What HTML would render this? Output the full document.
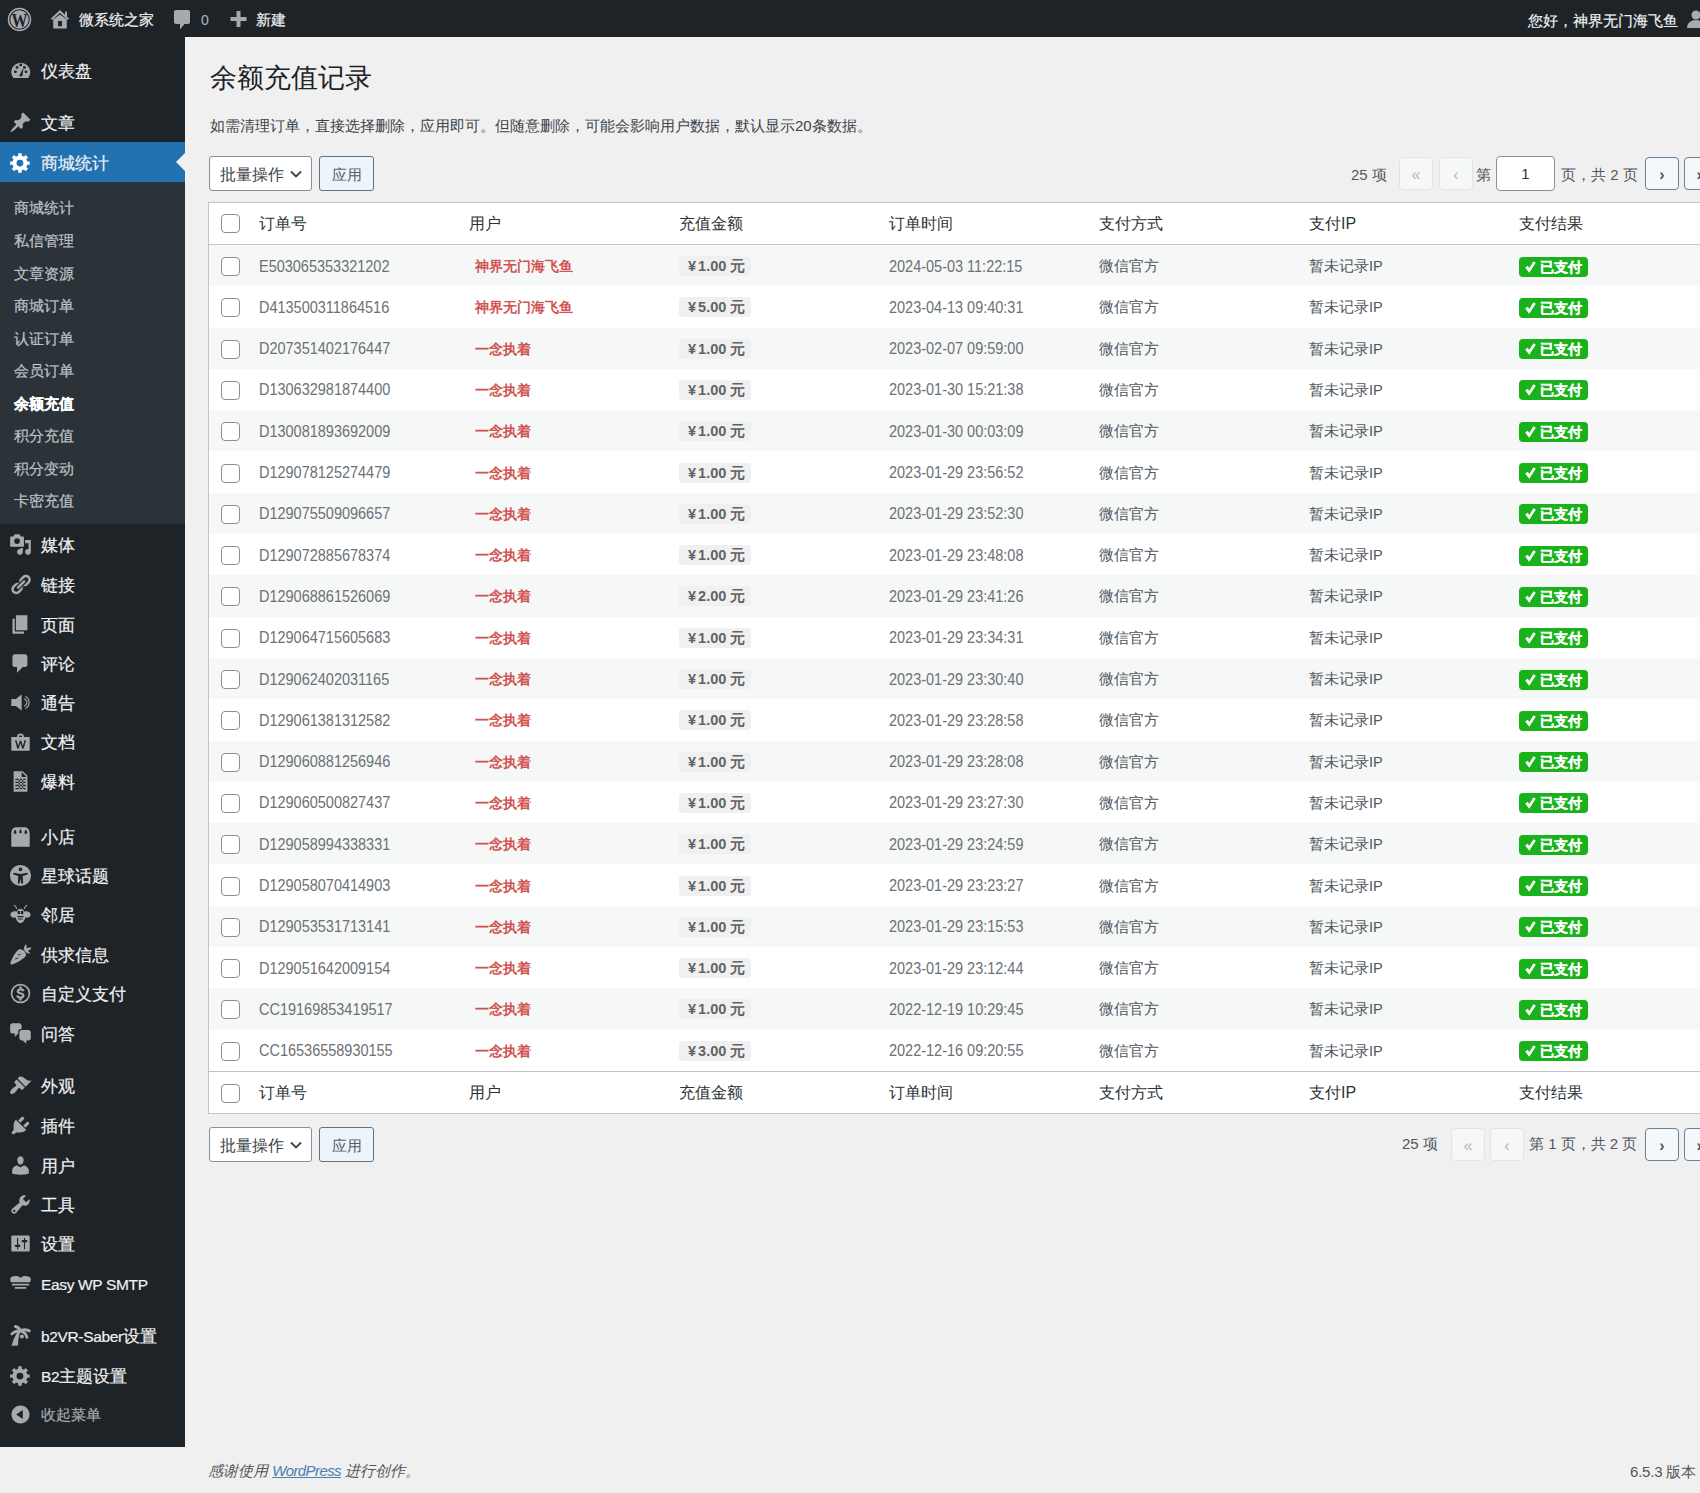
<!DOCTYPE html>
<html><head><meta charset="utf-8">
<style>
*{box-sizing:border-box;margin:0;padding:0}
html,body{width:1700px;height:1493px;overflow:hidden;background:#f0f0f1;font-family:"Liberation Sans",sans-serif;color:#3c434a}
.mi,.si,#ab .t{-webkit-text-stroke:0.2px currentColor}
.abs{position:absolute}
#ab{position:absolute;left:0;top:0;width:1700px;height:37px;background:#1d2327;color:#f0f0f1;font-size:15px}
#ab .t{position:absolute;line-height:20px;top:10px;white-space:nowrap}
#sb{position:absolute;left:0;top:37px;width:185px;height:1410px;background:#1d2327}
#sub{position:absolute;left:0;top:145px;width:185px;height:342px;background:#2c3338}
#cur{position:absolute;left:0;top:105px;width:185px;height:40px;background:#2271b1}
.mi{position:absolute;left:0;width:185px;height:20px;line-height:20px;font-size:16.5px;color:#f0f0f1;white-space:nowrap}
.mi > span{position:absolute;left:41px;top:1px}
.mi svg{position:absolute;left:9px;top:-1.5px;width:23px;height:23px}
.si{position:absolute;left:14px;height:20px;line-height:20px;font-size:15px;margin-top:1.5px;color:rgba(240,246,252,.7);white-space:nowrap}
.ic{fill:#a7aaad}
.lat{font-size:15.5px;letter-spacing:-0.35px}
h1{position:absolute;left:210px;top:61px;font-size:26.6px;font-weight:400;color:#1d2327;line-height:34px;white-space:nowrap}
.desc{position:absolute;left:210px;top:115.5px;font-size:15px;line-height:20px;color:#3c434a;white-space:nowrap}
.sel{position:absolute;left:209px;width:103px;height:35px;border:1px solid #8c8f94;border-radius:3px;background:#fff;font-size:16px;color:#3c434a;line-height:35px;padding-left:10px}
.sel svg{position:absolute;right:8px;top:10px}
.btn{position:absolute;left:319px;width:55px;height:35px;border:1px solid #5f7285;border-radius:3px;background:#eef5fa;font-size:15px;color:#50606e;line-height:35px;text-align:center}
.pg{position:absolute;height:35px;font-size:15px;color:#50575e;line-height:37px;white-space:nowrap}
.pb{position:absolute;width:34px;height:33px;margin-top:1px;border:1px solid #e2e3e4;border-radius:4px;background:#f6f7f7;color:#b5b8bb;text-align:center;line-height:33px;font-size:16px}
.pb.on{border-color:#6a8199;color:#50575e;background:#f5f8fa;font-weight:bold}
.pinput{position:absolute;width:59px;height:35px;border:1px solid #8c8f94;border-radius:4px;background:#fff;text-align:center;line-height:33px;font-size:15px;color:#2c3338}
#tbl{position:absolute;left:208px;top:202px;width:1530px;height:912px;background:#fff;border:1px solid #c3c4c7}
.row{position:absolute;left:0;width:1530px;height:41.3px;font-size:14.6px;color:#50575e;white-space:nowrap}
.row.odd{background:#f6f7f7}
.row div{position:absolute;top:1px;height:41.3px;line-height:41.3px}
.row .c1,.row .c4{font-size:16px;transform:scaleX(0.905);transform-origin:0 0;color:#6c7176;top:0.5px}
.hrow{position:absolute;left:0;width:1530px;height:41px;font-size:16px;color:#2c3338;white-space:nowrap}
.hrow div{position:absolute;top:0;height:41px;line-height:41px}
.chk{position:absolute;left:12px;top:11px;width:19px;height:19px;border:1px solid #8c8f94;border-radius:4px;background:#fff}
.usr{color:#d05452;font-weight:bold;font-size:14px;margin-left:6px}
.amt{display:inline-block;background:#f0f0f0;color:#50575e;font-weight:bold;font-size:14px;height:20px;line-height:20px;padding:0 6px 0 9px;border-radius:3px;font-size:14.5px;color:#5f6368}
.paid{position:relative;top:0.5px;-webkit-text-stroke:0.3px #fff;display:inline-block;background:#19b21b;color:#fff;font-weight:bold;font-size:14px;height:20px;line-height:20px;padding:0 6px;border-radius:4px}
.foot{position:absolute;left:208px;top:1461px;font-size:15px;font-style:italic;color:#50575e;line-height:20px;white-space:nowrap}
.foot a{color:#4a7fae;text-decoration:underline;letter-spacing:-0.6px}
.ver{position:absolute;left:1630px;top:1462px;letter-spacing:-0.2px;font-size:15px;color:#50575e;line-height:20px;white-space:nowrap}
</style></head><body>
<div id="ab">
 <svg class="abs" style="left:7px;top:6.5px" width="25" height="25" viewBox="0 0 25 25"><circle cx="12.5" cy="12.5" r="11" fill="none" stroke="#a7aaad" stroke-width="1.5"/><circle cx="12.5" cy="12.5" r="9.2" fill="#a7aaad"/><text x="12.6" y="19.8" text-anchor="middle" font-family="Liberation Serif" font-weight="bold" font-size="19" fill="#1d2327" textLength="16" lengthAdjust="spacingAndGlyphs">W</text></svg>
 <svg class="abs" style="left:45px;top:5px" width="30" height="30" viewBox="0 0 30 30"><polyline points="6.6,14.2 14.9,6.4 23.3,14.2" fill="none" stroke="#a7aaad" stroke-width="2"/><rect x="20" y="6.6" width="2" height="4.5" fill="#a7aaad"/><path fill-rule="evenodd" d="M8.2 14.6L14.9 9.4 21.8 14.6V23.5H8.2z M13 16h4v5.3h-4z" fill="#a7aaad"/></svg>
 <div class="t" style="left:79px">微系统之家</div>
 <svg class="abs" style="left:174px;top:10px" width="16" height="20" viewBox="0 0 16 20"><path d="M2 0h12a2 2 0 0 1 2 2v10a2 2 0 0 1-2 2H10.5l-4.5 5.5V14H2a2 2 0 0 1-2-2V2a2 2 0 0 1 2-2z" fill="#a7aaad"/></svg>
 <div class="t" style="left:201px;color:#a7aaad;font-size:14px;top:10px">0</div>
 <svg class="abs" style="left:230px;top:11px" width="17" height="16" viewBox="0 0 17 16"><path d="M6.5 0h4v6h6v4h-6v6h-4v-6h-6V6h6z" fill="#a7aaad"/></svg>
 <div class="t" style="left:256px">新建</div>
 <div class="t" style="left:1528px;top:10.5px">您好，神界无门海飞鱼</div>
 <svg class="abs" style="left:1686px;top:9px" width="20" height="20" viewBox="0 0 20 20"><circle cx="10" cy="6" r="4.5" fill="#a7aaad"/><path d="M1 19c0-5 4-8 9-8s9 3 9 8z" fill="#a7aaad"/></svg>
</div>
<div id="sb">
 <div id="cur"></div>
 <div id="sub"></div>
</div>
<div class="mi" style="top:60px"><svg viewBox="0 0 20 20" style="fill:#a7aaad" fill-rule="evenodd"><g transform="translate(10.2 10) scale(0.92 0.9) translate(-10 -10)"><path d="M3 17.2h14A9 9 0 1 0 3 17.2z M3.6 11.3a1.4 1.4 0 1 0 2.8 0a1.4 1.4 0 1 0-2.8 0z M13.6 11.3a1.4 1.4 0 1 0 2.8 0a1.4 1.4 0 1 0-2.8 0z M5.1 7a1.4 1.4 0 1 0 2.8 0a1.4 1.4 0 1 0-2.8 0z M12.1 7a1.4 1.4 0 1 0 2.8 0a1.4 1.4 0 1 0-2.8 0z M8.6 4.6a1.4 1.4 0 1 0 2.8 0a1.4 1.4 0 1 0-2.8 0z M8.3 15.6h3.2l1.3-8.6z"/></g></svg><span>仪表盘</span></div>
<div class="mi" style="top:112px"><svg viewBox="0 0 20 20" style="fill:#a7aaad" fill-rule="evenodd"><path d="M10.44 3.02l1.82-1.82 6.36 6.35-1.83 1.82c-1.05-.68-2.48-.57-3.41.36l-.75.75c-.92.93-1.04 2.35-.35 3.41l-1.83 1.82-2.41-2.41-2.8 2.79c-.42.42-3.38 2.71-3.8 2.29s1.86-3.39 2.28-3.81l2.79-2.79L4.1 9.36l1.83-1.82c1.05.69 2.48.57 3.4-.36l.75-.75c.93-.92 1.05-2.35.36-3.41z"/></svg><span>文章</span></div>
<div class="mi" style="top:152px"><svg viewBox="0 0 20 20" style="fill:#fff" fill-rule="evenodd"><path d="M18 12h-2.18c-.17.7-.44 1.35-.81 1.93l1.54 1.54-2.1 2.1-1.54-1.54c-.58.36-1.23.63-1.91.79V19H8v-2.18c-.68-.16-1.33-.43-1.91-.79l-1.54 1.54-2.12-2.12 1.54-1.54c-.36-.58-.63-1.23-.79-1.91H1V9.03h2.17c.16-.7.44-1.35.8-1.94L2.43 5.55l2.1-2.1 1.54 1.54c.58-.37 1.24-.64 1.930-.81V2h3v2.18c.68.16 1.33.43 1.91.79l1.54-1.54 2.12 2.12-1.54 1.54c.36.59.64 1.24.8 1.94H18V12z M6.5 10.5a3 3 0 1 0 6 0a3 3 0 1 0-6 0z"/></svg><span>商城统计</span></div>
<div class="mi" style="top:534px"><svg viewBox="0 0 20 20" style="fill:#a7aaad" fill-rule="evenodd"><path d="M13 11V4c0-.55-.45-1-1-1h-1.67L9 1H5L3.67 3H2c-.55 0-1 .45-1 1v7c0 .55.45 1 1 1h10c.55 0 1-.45 1-1z M4.5 7a2.5 2.5 0 1 0 5 0a2.5 2.5 0 1 0-5 0z M14 6h5v10.5c0 1.38-1.12 2.5-2.5 2.5S14 17.880 14 16.5s1.12-2.5 2.5-2.5c.17 0 .34.02.5.05V9h-3V6z M10 14.05V13h2v3.5c0 1.38-1.12 2.5-2.5 2.5S7 17.88 7 16.5 8.12 14 9.5 14c.17 0 .34.02.5.05z"/></svg><span>媒体</span></div>
<div class="mi" style="top:574px"><svg viewBox="0 0 20 20" style="fill:#a7aaad" fill-rule="evenodd"><path fill-rule="nonzero" d="M17.74 2.76c1.68 1.69 1.68 4.41 0 6.1l-1.53 1.52c-1.12 1.12-2.7 1.47-4.14 1.09l2.62-2.61.76-.77.76-.76c.84-.84.84-2.2 0-3.04-.84-.85-2.2-.85-3.04 0l-.77.76-3.38 3.380c-.37-1.44-.02-3.02 1.1-4.14l1.52-1.53c1.69-1.68 4.42-1.68 6.1 0zM8.59 13.43l5.34-5.34c.42-.42.42-1.1 0-1.52-.44-.43-1.13-.39-1.53 0l-5.33 5.34c-.42.42-.42 1.1 0 1.52.44.43 1.13.39 1.52 0zm-.76 2.29l4.14-4.15c.38 1.44.03 3.02-1.09 4.14l-1.52 1.53c-1.69 1.68-4.41 1.68-6.1 0-1.68-1.68-1.68-4.42 0-6.1l1.53-1.52c1.12-1.12 2.7-1.47 4.14-1.1l-4.14 4.15c-.85.84-.85 2.2 0 3.05.84.84 2.2.84 3.04 0z"/></svg><span>链接</span></div>
<div class="mi" style="top:614px"><svg viewBox="0 0 20 20" style="fill:#a7aaad" fill-rule="evenodd"><path d="M6 15V2h10v13H6z M5 16h8v2H3V5h2v11z"/></svg><span>页面</span></div>
<div class="mi" style="top:653px"><svg viewBox="0 0 20 20" style="fill:#a7aaad" fill-rule="evenodd"><path d="M5 2h9c1.1 0 2 .9 2 2v7c0 1.1-.9 2-2 2h-2l-5 5v-5H5c-1.1 0-2-.9-2-2V4c0-1.1.9-2 2-2z"/></svg><span>评论</span></div>
<div class="mi" style="top:692px"><svg viewBox="0 0 20 20" style="fill:#a7aaad" fill-rule="evenodd"><path fill-rule="nonzero" d="M2 7h4l5-4v14l-5-4H2V7zm12.69-2.46C14.82 4.59 18 5.920 18 10s-3.18 5.41-3.31 5.46c-.06.03-.13.04-.19.04-.2 0-.39-.12-.46-.31-.11-.26.02-.55.27-.65.11-.05 2.69-1.15 2.69-4.54 0-3.41-2.66-4.53-2.69-4.54-.25-.1-.38-.39-.27-.65.1-.25.39-.38.65-.27zM16 10c0 2.57-2.23 3.43-2.32 3.47-.06.02-.12.03-.18.03-.2 0-.39-.12-.47-.32-.1-.26.04-.55.29-.65.07-.02 1.68-.67 1.68-2.53s-1.61-2.51-1.68-2.53c-.25-.1-.38-.39-.29-.65.1-.25.39-.39.65-.29.09.04 2.32.9 2.32 3.47z"/></svg><span>通告</span></div>
<div class="mi" style="top:731px"><svg viewBox="0 0 20 20" style="fill:#a7aaad" fill-rule="evenodd"><path d="M2 6h16v12H2z M7 6a3 3 0 0 1 6 0h-1.6a1.4 1.4 0 0 0-2.8 0z M5.2 9l2 7h1.3l1.5-4.6 1.5 4.6h1.3l2-7h-1.3l-1.4 5-1.5-4.7h-1.2l-1.5 4.7-1.4-5z"/></svg><span>文档</span></div>
<div class="mi" style="top:771px"><svg viewBox="0 0 20 20" style="fill:#a7aaad" fill-rule="evenodd"><path d="M4 1h8l4 4v14H4z M11 1.8V6h4.2z M5.5 7.5h9v1.2h-9z M5.5 10.2h9v1.2h-9z M5.5 12.9h9v1.2h-9z M5.5 15.6h9v1.2h-9z M8.4 7.5h1v9.3h-1z M11.4 7.5h1v9.3h-1z"/></svg><span>爆料</span></div>
<div class="mi" style="top:826px"><svg viewBox="0 0 20 20" style="fill:#a7aaad" fill-rule="evenodd"><path d="M2 7.5C2 3.5 4 2 7 2h6c3 0 5 1.5 5 5.5V19H2z M5.300 4.300c.8 0 1.200 1.500 1.200 3.200H4.200c0-1.700.3-3.200 1.100-3.200z M10 3.600c.7 0 1 1.600 1 3.600H9c0-2 .3-3.600 1-3.600z M14.700 4.300c.8 0 1.100 1.500 1.100 3.200h-2.300c0-1.700.4-3.200 1.200-3.200z"/></svg><span>小店</span></div>
<div class="mi" style="top:865px"><svg viewBox="0 0 20 20" style="fill:#a7aaad" fill-rule="evenodd"><path d="M0.8 10a9.2 9.2 0 1 0 18.4 0a9.2 9.2 0 1 0-18.4 0z M8.4 4.6a1.6 1.6 0 1 0 3.2 0a1.6 1.6 0 1 0-3.2 0z M3.8 7.6l6.2 1 6.2-1v1.6l-4.300 1.300.4 6.500h-1.600l-.7-4.200-.7 4.200H7.700l.4-6.500-4.300-1.300z"/></svg><span>星球话题</span></div>
<div class="mi" style="top:904px"><svg viewBox="0 0 20 20" style="fill:#a7aaad" fill-rule="evenodd"><path d="M10 5c1.8 0 3 1.2 3.2 2.6 2.6-1 5.6.3 5.6 2.6 0 2-2.3 3-4.6 2.5-.6 2.6-2.2 4.8-4.2 4.8s-3.6-2.2-4.2-4.8c-2.3.5-4.6-.5-4.6-2.5 0-2.3 3-3.6 5.6-2.6C7 6.2 8.200 5 10 5z M7.3 11.3h5.4v1H7.3z M8 13.4h4v.9H8z M7.6 8.2a1.1 1.1 0 1 0 2 0a1.1 1.1 0 1 0-2 0z M10.4 8.2a1.1 1.1 0 1 0 2 0a1.1 1.1 0 1 0-2 0z M4.5 1.5c1.3.8 2.3 2 2.7 3.5l-.8.4C6 4 5.2 3 4 2.2z M15.5 1.5c-1.3.8-2.3 2-2.7 3.5l.8.4c.4-1.4 1.2-2.400 2.4-3.2z"/></svg><span>邻居</span></div>
<div class="mi" style="top:944px"><svg viewBox="0 0 20 20" style="fill:#a7aaad" fill-rule="evenodd"><path d="M1.5 18.5c1.5 1.3 11.6-4.7 13.1-7.2.7-1.2-.1-3-1.5-4.4C11.3 5.4 9.400 5 8.200 5.800 6 7.400 4 11 2.800 13.500 1.8 15.600 .8 17.900 1.500 18.500z M12.800 5.500c.200-1.700.800-3.600 2-4.500.800 1 .800 2.500.400 3.700 1.200-.800 2.800-1 4.300-.700-.400 1.500-1.700 2.500-3.200 2.900 1 .400 1.800 1.200 2.100 2.200-1.500.300-3-.200-4-1.200z M5.200 13.600l2.600-1 .3.7-2.600 1z M7.600 10.200l2.300-.9.3.7-2.300.9z"/></svg><span>供求信息</span></div>
<div class="mi" style="top:983px"><svg viewBox="0 0 20 20" style="fill:#a7aaad" fill-rule="evenodd"><path d="M1.500 10a8.500 8.500 0 1 0 17 0a8.500 8.500 0 1 0-17 0z M3 10a7 7 0 1 0 14 0a7 7 0 1 0-14 0z M9 3.900h2v1.500c1.300.3 2.300 1.100 2.500 2.300l-2 .5c-.2-.6-.7-.9-1.500-.9-.8 0-1.200.3-1.200.8 0 .6.600.8 1.700 1.100 1.700.4 3 1 3 2.800 0 1.300-1 2.200-2.500 2.500v1.500H9v-1.500c-1.600-.3-2.600-1.200-2.800-2.500l2-.5c.2.800.9 1.200 1.800 1.200s1.400-.3 1.400-.9c0-.6-.6-.8-1.800-1.100-1.600-.4-2.900-1-2.900-2.700 0-1.300.9-2.100 2.300-2.400z"/></svg><span>自定义支付</span></div>
<div class="mi" style="top:1023px"><svg viewBox="0 0 20 20" style="fill:#a7aaad" fill-rule="evenodd"><path d="M11 6h-.82C9.07 6 8 7.2 8 8.16V10l-3 3v-3H3c-1.1 0-2-.9-2-2V3c0-1.1.9-2 2-2h6c1.1 0 2 .9 2 2v3z M11 7h6c1.1 0 2 .9 2 2v5c0 1.1-.9 2-2 2h-2v3l-3-3h-1c-1.1 0-2-.9-2-2V9c0-1.1.9-2 2-2z"/></svg><span>问答</span></div>
<div class="mi" style="top:1075px"><svg viewBox="0 0 20 20" style="fill:#a7aaad" fill-rule="evenodd"><path fill-rule="nonzero" d="M14.48 11.06L7.41 3.99l1.5-1.5c.5-.56 2.3-.47 3.51.32 1.21.8 1.43 1.28 2.91 2.1 1.18.64 2.45 1.26 4.45.85zm-.71.71L6.7 4.7 4.93 6.47c-.39.39-.39 1.02 0 1.41l1.06 1.06c.39.39.39 1.03 0 1.42-.6.6-1.43 1.11-2.21 1.69-.35.26-.7.53-1.01.84C1.43 14.23.4 16.08 1.4 17.07c.99 1 2.84-.03 4.18-1.36.31-.31.58-.66.85-1.02.57-.78 1.08-1.61 1.69-2.21.39-.39 1.02-.39 1.41 0l1.06 1.06c.39.39 1.02.39 1.41 0z"/></svg><span>外观</span></div>
<div class="mi" style="top:1115px"><svg viewBox="0 0 20 20" style="fill:#a7aaad" fill-rule="evenodd"><path fill-rule="nonzero" d="M13.11 4.36L9.87 7.6 8 5.73l3.24-3.24c.35-.34 1.05-.2 1.56.32.52.51.66 1.21.31 1.55zm-8 1.77l.91-1.12 9.01 9.01-1.19.84c-.71.71-2.63 1.16-3.82 1.16H6.14L4.9 17.26c-.59.59-1.54.59-2.12 0-.59-.58-.59-1.53 0-2.12l1.24-1.24v-3.88c0-1.13.4-3.19 1.09-3.890zm7.26 3.97l3.24-3.24c.34-.35 1.04-.21 1.55.31.52.51.66 1.21.31 1.55l-3.24 3.25z"/></svg><span>插件</span></div>
<div class="mi" style="top:1155px"><svg viewBox="0 0 20 20" style="fill:#a7aaad" fill-rule="evenodd"><path fill-rule="nonzero" d="M10 9.25c-2.27 0-2.73-3.44-2.73-3.44C7 4.02 7.82 2 9.97 2c2.16 0 2.98 2.02 2.71 3.81 0 0-.41 3.44-2.68 3.44zm0 2.57L12.72 10c2.39 0 4.52 2.33 4.52 4.53v2.49s-3.65 1.13-7.24 1.13c-3.65 0-7.24-1.13-7.24-1.13v-2.49c0-2.25 1.94-4.48 4.47-4.48z"/></svg><span>用户</span></div>
<div class="mi" style="top:1194px"><svg viewBox="0 0 20 20" style="fill:#a7aaad" fill-rule="evenodd"><path d="M16.68 9.77c-1.34 1.34-3.3 1.67-4.95.99l-5.41 6.52c-.99.99-2.59.99-3.58 0s-.99-2.59 0-3.57l6.52-5.42c-.68-1.65-.35-3.61.99-4.95 1.28-1.28 3.12-1.62 4.72-1.06l-2.89 2.89 2.82 2.82 2.86-2.87c.53 1.58.18 3.39-1.08 4.65z M3.810 16.21c.4.39 1.04.39 1.43 0 .4-.4.4-1.04 0-1.43-.39-.4-1.03-.4-1.43 0-.39.39-.39 1.03 0 1.43z"/></svg><span>工具</span></div>
<div class="mi" style="top:1233px"><svg viewBox="0 0 20 20" style="fill:#a7aaad" fill-rule="evenodd"><path d="M18 16V4c0-.55-.45-1-1-1H3c-.55 0-1 .45-1 1v12c0 .55.45 1 1 1h14c.55 0 1-.45 1-1z M8 11h1c.55 0 1 .45 1 1s-.45 1-1 1H8v1.5c0 .28-.22.5-.5.5s-.5-.22-.5-.5V13H6c-.55 0-1-.45-1-1s.45-1 1-1h1V5.5c0-.28.22-.5.5-.5s.5.22.5.5V11z M13 9h-1c-.55 0-1-.45-1-1s.45-1 1-1h1V5.5c0-.28.22-.5.5-.5s.5.22.5.5V7h1c.55 0 1 .45 1 1s-.45 1-1 1h-1v5.5c0 .28-.22.5-.5.5s-.5-.22-.5-.5V9z"/></svg><span>设置</span></div>
<div class="mi" style="top:1273px"><svg viewBox="0 0 20 20" style="fill:#a7aaad" fill-rule="evenodd"><path d="M1 6.5C1 4 4 3.5 6.5 3.5c1.5 0 2.5.8 3.5 1.6 1-.8 2-1.6 3.5-1.6 2.5 0 5.5.5 5.5 3 0 1.2-.5 2-1 2.5H2c-.5-.5-1-1.3-1-2.5z M2.5 10.3h15v1.5h-15z M5 13h10v1.5H5z"/></svg><span><span class=lat>Easy WP SMTP</span></span></div>
<div class="mi" style="top:1325px"><svg viewBox="0 0 20 20" style="fill:#a7aaad" fill-rule="evenodd"><path d="M2.2 19l5.6-.4c.2-5 .8-9.500 2.400-12.600l-1.400-.7C6 8.500 3.800 13 2.200 19z"/><g fill="none" stroke="#a7aaad" stroke-width="2.5" stroke-linecap="round"><path d="M9.800 6C8 5.600 4.500 6.400 2.500 8.600"/><path d="M9.600 5.600C9 3.800 7.600 2.600 5.600 2.200"/><path d="M10 5.800c2.400-1.200 5.600-.8 7.600.2"/><path d="M10.200 6.200c2.800.6 4.800 2.600 5.400 5.400"/></g><circle cx="11.200" cy="10.800" r="1.700"/></svg><span><span class=lat>b2VR-Saber</span>设置</span></div>
<div class="mi" style="top:1365px"><svg viewBox="0 0 20 20" style="fill:#a7aaad" fill-rule="evenodd"><path d="M18 12h-2.18c-.17.7-.44 1.35-.81 1.93l1.54 1.54-2.1 2.1-1.54-1.54c-.58.36-1.23.63-1.91.79V19H8v-2.18c-.68-.16-1.33-.43-1.91-.79l-1.54 1.54-2.12-2.12 1.54-1.54c-.36-.58-.63-1.23-.79-1.91H1V9.03h2.17c.16-.7.44-1.35.8-1.94L2.43 5.55l2.1-2.1 1.54 1.54c.58-.37 1.24-.64 1.930-.81V2h3v2.18c.68.16 1.33.43 1.91.79l1.54-1.54 2.12 2.12-1.54 1.54c.36.59.64 1.24.8 1.94H18V12z M6.5 10.5a3 3 0 1 0 6 0a3 3 0 1 0-6 0z"/></svg><span><span class=lat>B2</span>主题设置</span></div>
<div class="mi" style="top:1404px;font-size:15px;color:#a7aaad"><svg viewBox="0 0 20 20" style="fill:#a7aaad" fill-rule="evenodd"><path d="M10 2.16c4.33 0 7.84 3.51 7.84 7.84s-3.51 7.84-7.84 7.84S2.16 14.33 2.16 10 5.71 2.16 10 2.16z M12 13.88V6.12L6.18 9.97z"/></svg><span>收起菜单</span></div>
<div class="si" style="top:196px">商城统计</div>
<div class="si" style="top:229px">私信管理</div>
<div class="si" style="top:262px">文章资源</div>
<div class="si" style="top:294px">商城订单</div>
<div class="si" style="top:327px">认证订单</div>
<div class="si" style="top:359px">会员订单</div>
<div class="si" style="top:392px;color:#fff;font-weight:bold">余额充值</div>
<div class="si" style="top:424px">积分充值</div>
<div class="si" style="top:457px">积分变动</div>
<div class="si" style="top:489px">卡密充值</div>
<div class="abs" style="left:176px;top:153px;width:0;height:0;border-top:9px solid transparent;border-bottom:9px solid transparent;border-right:9px solid #f0f0f1"></div>
<h1>余额充值记录</h1>
<div class="desc">如需清理订单，直接选择删除，应用即可。但随意删除，可能会影响用户数据，默认显示20条数据。</div>
<div class="sel" style="top:156px">批量操作<svg width="14" height="14" viewBox="0 0 14 14"><path d="M2 4.5l5 5 5-5" fill="none" stroke="#3c434a" stroke-width="1.8"/></svg></div><div class="btn" style="top:156px">应用</div><div class="pg" style="left:1351px;top:156px">25 项</div><div class="pb" style="left:1399px;top:156px">«</div><div class="pb" style="left:1439px;top:156px">‹</div><div class="pg" style="left:1476px;top:156px">第</div><div class="pinput" style="left:1496px;top:156px">1</div><div class="pg" style="left:1561px;top:156px">页，共 2 页</div><div class="pb on" style="left:1645px;top:156px">›</div><div class="pb on" style="left:1684px;top:156px">»</div><div class="sel" style="top:1127px">批量操作<svg width="14" height="14" viewBox="0 0 14 14"><path d="M2 4.5l5 5 5-5" fill="none" stroke="#3c434a" stroke-width="1.8"/></svg></div><div class="btn" style="top:1127px">应用</div><div class="pg" style="left:1402px;top:1127px;line-height:34px">25 项</div><div class="pb" style="left:1451px;top:1127px">«</div><div class="pb" style="left:1490px;top:1127px">‹</div><div class="pg" style="left:1529px;top:1127px;line-height:34px">第 1 页，共 2 页</div><div class="pb on" style="left:1645px;top:1127px">›</div><div class="pb on" style="left:1684px;top:1127px">»</div>
<div id="tbl">
<div class="hrow" style="top:0px"><span class="chk" style="top:11px"></span><div style="left:50px">订单号</div><div style="left:260px">用户</div><div style="left:470px">充值金额</div><div style="left:680px">订单时间</div><div style="left:890px">支付方式</div><div style="left:1100px">支付IP</div><div style="left:1310px">支付结果</div></div>
<div class="abs" style="left:0;top:41px;width:1530px;height:1px;background:#c3c4c7"></div>
<div class="row odd" style="top:42.00px"><span class="chk" style="top:12px"></span><div class="c1" style="left:50px">E503065353321202</div><div class="c2" style="left:260px"><span class="usr">神界无门海飞鱼</span></div><div class="c3" style="left:470px"><span class="amt"><span style="margin-right:2px">¥</span>1.00 元</span></div><div class="c4" style="left:680px">2024-05-03 11:22:15</div><div class="c5" style="left:890px">微信官方</div><div class="c6" style="left:1100px">暂未记录IP</div><div class="c7" style="left:1310px"><span class="paid"><svg width="11" height="12" viewBox="0 0 11 12" style="margin-right:4px;vertical-align:-1px"><path d="M0.2 6.4l2.5-1.7 1.6 2.4L8.4 0.2l2.4 1.5-6.600 10z" fill="#fff"/></svg>已支付</span></div></div>
<div class="row even" style="top:83.30px"><span class="chk" style="top:12px"></span><div class="c1" style="left:50px">D413500311864516</div><div class="c2" style="left:260px"><span class="usr">神界无门海飞鱼</span></div><div class="c3" style="left:470px"><span class="amt"><span style="margin-right:2px">¥</span>5.00 元</span></div><div class="c4" style="left:680px">2023-04-13 09:40:31</div><div class="c5" style="left:890px">微信官方</div><div class="c6" style="left:1100px">暂未记录IP</div><div class="c7" style="left:1310px"><span class="paid"><svg width="11" height="12" viewBox="0 0 11 12" style="margin-right:4px;vertical-align:-1px"><path d="M0.2 6.4l2.5-1.7 1.6 2.4L8.4 0.2l2.4 1.5-6.600 10z" fill="#fff"/></svg>已支付</span></div></div>
<div class="row odd" style="top:124.60px"><span class="chk" style="top:12px"></span><div class="c1" style="left:50px">D207351402176447</div><div class="c2" style="left:260px"><span class="usr">一念执着</span></div><div class="c3" style="left:470px"><span class="amt"><span style="margin-right:2px">¥</span>1.00 元</span></div><div class="c4" style="left:680px">2023-02-07 09:59:00</div><div class="c5" style="left:890px">微信官方</div><div class="c6" style="left:1100px">暂未记录IP</div><div class="c7" style="left:1310px"><span class="paid"><svg width="11" height="12" viewBox="0 0 11 12" style="margin-right:4px;vertical-align:-1px"><path d="M0.2 6.4l2.5-1.7 1.6 2.4L8.4 0.2l2.4 1.5-6.600 10z" fill="#fff"/></svg>已支付</span></div></div>
<div class="row even" style="top:165.90px"><span class="chk" style="top:12px"></span><div class="c1" style="left:50px">D130632981874400</div><div class="c2" style="left:260px"><span class="usr">一念执着</span></div><div class="c3" style="left:470px"><span class="amt"><span style="margin-right:2px">¥</span>1.00 元</span></div><div class="c4" style="left:680px">2023-01-30 15:21:38</div><div class="c5" style="left:890px">微信官方</div><div class="c6" style="left:1100px">暂未记录IP</div><div class="c7" style="left:1310px"><span class="paid"><svg width="11" height="12" viewBox="0 0 11 12" style="margin-right:4px;vertical-align:-1px"><path d="M0.2 6.4l2.5-1.7 1.6 2.4L8.4 0.2l2.4 1.5-6.600 10z" fill="#fff"/></svg>已支付</span></div></div>
<div class="row odd" style="top:207.20px"><span class="chk" style="top:12px"></span><div class="c1" style="left:50px">D130081893692009</div><div class="c2" style="left:260px"><span class="usr">一念执着</span></div><div class="c3" style="left:470px"><span class="amt"><span style="margin-right:2px">¥</span>1.00 元</span></div><div class="c4" style="left:680px">2023-01-30 00:03:09</div><div class="c5" style="left:890px">微信官方</div><div class="c6" style="left:1100px">暂未记录IP</div><div class="c7" style="left:1310px"><span class="paid"><svg width="11" height="12" viewBox="0 0 11 12" style="margin-right:4px;vertical-align:-1px"><path d="M0.2 6.4l2.5-1.7 1.6 2.4L8.4 0.2l2.4 1.5-6.600 10z" fill="#fff"/></svg>已支付</span></div></div>
<div class="row even" style="top:248.50px"><span class="chk" style="top:12px"></span><div class="c1" style="left:50px">D129078125274479</div><div class="c2" style="left:260px"><span class="usr">一念执着</span></div><div class="c3" style="left:470px"><span class="amt"><span style="margin-right:2px">¥</span>1.00 元</span></div><div class="c4" style="left:680px">2023-01-29 23:56:52</div><div class="c5" style="left:890px">微信官方</div><div class="c6" style="left:1100px">暂未记录IP</div><div class="c7" style="left:1310px"><span class="paid"><svg width="11" height="12" viewBox="0 0 11 12" style="margin-right:4px;vertical-align:-1px"><path d="M0.2 6.4l2.5-1.7 1.6 2.4L8.4 0.2l2.4 1.5-6.600 10z" fill="#fff"/></svg>已支付</span></div></div>
<div class="row odd" style="top:289.80px"><span class="chk" style="top:12px"></span><div class="c1" style="left:50px">D129075509096657</div><div class="c2" style="left:260px"><span class="usr">一念执着</span></div><div class="c3" style="left:470px"><span class="amt"><span style="margin-right:2px">¥</span>1.00 元</span></div><div class="c4" style="left:680px">2023-01-29 23:52:30</div><div class="c5" style="left:890px">微信官方</div><div class="c6" style="left:1100px">暂未记录IP</div><div class="c7" style="left:1310px"><span class="paid"><svg width="11" height="12" viewBox="0 0 11 12" style="margin-right:4px;vertical-align:-1px"><path d="M0.2 6.4l2.5-1.7 1.6 2.4L8.4 0.2l2.4 1.5-6.600 10z" fill="#fff"/></svg>已支付</span></div></div>
<div class="row even" style="top:331.10px"><span class="chk" style="top:12px"></span><div class="c1" style="left:50px">D129072885678374</div><div class="c2" style="left:260px"><span class="usr">一念执着</span></div><div class="c3" style="left:470px"><span class="amt"><span style="margin-right:2px">¥</span>1.00 元</span></div><div class="c4" style="left:680px">2023-01-29 23:48:08</div><div class="c5" style="left:890px">微信官方</div><div class="c6" style="left:1100px">暂未记录IP</div><div class="c7" style="left:1310px"><span class="paid"><svg width="11" height="12" viewBox="0 0 11 12" style="margin-right:4px;vertical-align:-1px"><path d="M0.2 6.4l2.5-1.7 1.6 2.4L8.4 0.2l2.4 1.5-6.600 10z" fill="#fff"/></svg>已支付</span></div></div>
<div class="row odd" style="top:372.40px"><span class="chk" style="top:12px"></span><div class="c1" style="left:50px">D129068861526069</div><div class="c2" style="left:260px"><span class="usr">一念执着</span></div><div class="c3" style="left:470px"><span class="amt"><span style="margin-right:2px">¥</span>2.00 元</span></div><div class="c4" style="left:680px">2023-01-29 23:41:26</div><div class="c5" style="left:890px">微信官方</div><div class="c6" style="left:1100px">暂未记录IP</div><div class="c7" style="left:1310px"><span class="paid"><svg width="11" height="12" viewBox="0 0 11 12" style="margin-right:4px;vertical-align:-1px"><path d="M0.2 6.4l2.5-1.7 1.6 2.4L8.4 0.2l2.4 1.5-6.600 10z" fill="#fff"/></svg>已支付</span></div></div>
<div class="row even" style="top:413.70px"><span class="chk" style="top:12px"></span><div class="c1" style="left:50px">D129064715605683</div><div class="c2" style="left:260px"><span class="usr">一念执着</span></div><div class="c3" style="left:470px"><span class="amt"><span style="margin-right:2px">¥</span>1.00 元</span></div><div class="c4" style="left:680px">2023-01-29 23:34:31</div><div class="c5" style="left:890px">微信官方</div><div class="c6" style="left:1100px">暂未记录IP</div><div class="c7" style="left:1310px"><span class="paid"><svg width="11" height="12" viewBox="0 0 11 12" style="margin-right:4px;vertical-align:-1px"><path d="M0.2 6.4l2.5-1.7 1.6 2.4L8.4 0.2l2.4 1.5-6.600 10z" fill="#fff"/></svg>已支付</span></div></div>
<div class="row odd" style="top:455.00px"><span class="chk" style="top:12px"></span><div class="c1" style="left:50px">D129062402031165</div><div class="c2" style="left:260px"><span class="usr">一念执着</span></div><div class="c3" style="left:470px"><span class="amt"><span style="margin-right:2px">¥</span>1.00 元</span></div><div class="c4" style="left:680px">2023-01-29 23:30:40</div><div class="c5" style="left:890px">微信官方</div><div class="c6" style="left:1100px">暂未记录IP</div><div class="c7" style="left:1310px"><span class="paid"><svg width="11" height="12" viewBox="0 0 11 12" style="margin-right:4px;vertical-align:-1px"><path d="M0.2 6.4l2.5-1.7 1.6 2.4L8.4 0.2l2.4 1.5-6.600 10z" fill="#fff"/></svg>已支付</span></div></div>
<div class="row even" style="top:496.30px"><span class="chk" style="top:12px"></span><div class="c1" style="left:50px">D129061381312582</div><div class="c2" style="left:260px"><span class="usr">一念执着</span></div><div class="c3" style="left:470px"><span class="amt"><span style="margin-right:2px">¥</span>1.00 元</span></div><div class="c4" style="left:680px">2023-01-29 23:28:58</div><div class="c5" style="left:890px">微信官方</div><div class="c6" style="left:1100px">暂未记录IP</div><div class="c7" style="left:1310px"><span class="paid"><svg width="11" height="12" viewBox="0 0 11 12" style="margin-right:4px;vertical-align:-1px"><path d="M0.2 6.4l2.5-1.7 1.6 2.4L8.4 0.2l2.4 1.5-6.600 10z" fill="#fff"/></svg>已支付</span></div></div>
<div class="row odd" style="top:537.60px"><span class="chk" style="top:12px"></span><div class="c1" style="left:50px">D129060881256946</div><div class="c2" style="left:260px"><span class="usr">一念执着</span></div><div class="c3" style="left:470px"><span class="amt"><span style="margin-right:2px">¥</span>1.00 元</span></div><div class="c4" style="left:680px">2023-01-29 23:28:08</div><div class="c5" style="left:890px">微信官方</div><div class="c6" style="left:1100px">暂未记录IP</div><div class="c7" style="left:1310px"><span class="paid"><svg width="11" height="12" viewBox="0 0 11 12" style="margin-right:4px;vertical-align:-1px"><path d="M0.2 6.4l2.5-1.7 1.6 2.4L8.4 0.2l2.4 1.5-6.600 10z" fill="#fff"/></svg>已支付</span></div></div>
<div class="row even" style="top:578.90px"><span class="chk" style="top:12px"></span><div class="c1" style="left:50px">D129060500827437</div><div class="c2" style="left:260px"><span class="usr">一念执着</span></div><div class="c3" style="left:470px"><span class="amt"><span style="margin-right:2px">¥</span>1.00 元</span></div><div class="c4" style="left:680px">2023-01-29 23:27:30</div><div class="c5" style="left:890px">微信官方</div><div class="c6" style="left:1100px">暂未记录IP</div><div class="c7" style="left:1310px"><span class="paid"><svg width="11" height="12" viewBox="0 0 11 12" style="margin-right:4px;vertical-align:-1px"><path d="M0.2 6.4l2.5-1.7 1.6 2.4L8.4 0.2l2.4 1.5-6.600 10z" fill="#fff"/></svg>已支付</span></div></div>
<div class="row odd" style="top:620.20px"><span class="chk" style="top:12px"></span><div class="c1" style="left:50px">D129058994338331</div><div class="c2" style="left:260px"><span class="usr">一念执着</span></div><div class="c3" style="left:470px"><span class="amt"><span style="margin-right:2px">¥</span>1.00 元</span></div><div class="c4" style="left:680px">2023-01-29 23:24:59</div><div class="c5" style="left:890px">微信官方</div><div class="c6" style="left:1100px">暂未记录IP</div><div class="c7" style="left:1310px"><span class="paid"><svg width="11" height="12" viewBox="0 0 11 12" style="margin-right:4px;vertical-align:-1px"><path d="M0.2 6.4l2.5-1.7 1.6 2.4L8.4 0.2l2.4 1.5-6.600 10z" fill="#fff"/></svg>已支付</span></div></div>
<div class="row even" style="top:661.50px"><span class="chk" style="top:12px"></span><div class="c1" style="left:50px">D129058070414903</div><div class="c2" style="left:260px"><span class="usr">一念执着</span></div><div class="c3" style="left:470px"><span class="amt"><span style="margin-right:2px">¥</span>1.00 元</span></div><div class="c4" style="left:680px">2023-01-29 23:23:27</div><div class="c5" style="left:890px">微信官方</div><div class="c6" style="left:1100px">暂未记录IP</div><div class="c7" style="left:1310px"><span class="paid"><svg width="11" height="12" viewBox="0 0 11 12" style="margin-right:4px;vertical-align:-1px"><path d="M0.2 6.4l2.5-1.7 1.6 2.4L8.4 0.2l2.4 1.5-6.600 10z" fill="#fff"/></svg>已支付</span></div></div>
<div class="row odd" style="top:702.80px"><span class="chk" style="top:12px"></span><div class="c1" style="left:50px">D129053531713141</div><div class="c2" style="left:260px"><span class="usr">一念执着</span></div><div class="c3" style="left:470px"><span class="amt"><span style="margin-right:2px">¥</span>1.00 元</span></div><div class="c4" style="left:680px">2023-01-29 23:15:53</div><div class="c5" style="left:890px">微信官方</div><div class="c6" style="left:1100px">暂未记录IP</div><div class="c7" style="left:1310px"><span class="paid"><svg width="11" height="12" viewBox="0 0 11 12" style="margin-right:4px;vertical-align:-1px"><path d="M0.2 6.4l2.5-1.7 1.6 2.4L8.4 0.2l2.4 1.5-6.600 10z" fill="#fff"/></svg>已支付</span></div></div>
<div class="row even" style="top:744.10px"><span class="chk" style="top:12px"></span><div class="c1" style="left:50px">D129051642009154</div><div class="c2" style="left:260px"><span class="usr">一念执着</span></div><div class="c3" style="left:470px"><span class="amt"><span style="margin-right:2px">¥</span>1.00 元</span></div><div class="c4" style="left:680px">2023-01-29 23:12:44</div><div class="c5" style="left:890px">微信官方</div><div class="c6" style="left:1100px">暂未记录IP</div><div class="c7" style="left:1310px"><span class="paid"><svg width="11" height="12" viewBox="0 0 11 12" style="margin-right:4px;vertical-align:-1px"><path d="M0.2 6.4l2.5-1.7 1.6 2.4L8.4 0.2l2.4 1.5-6.600 10z" fill="#fff"/></svg>已支付</span></div></div>
<div class="row odd" style="top:785.40px"><span class="chk" style="top:12px"></span><div class="c1" style="left:50px">CC19169853419517</div><div class="c2" style="left:260px"><span class="usr">一念执着</span></div><div class="c3" style="left:470px"><span class="amt"><span style="margin-right:2px">¥</span>1.00 元</span></div><div class="c4" style="left:680px">2022-12-19 10:29:45</div><div class="c5" style="left:890px">微信官方</div><div class="c6" style="left:1100px">暂未记录IP</div><div class="c7" style="left:1310px"><span class="paid"><svg width="11" height="12" viewBox="0 0 11 12" style="margin-right:4px;vertical-align:-1px"><path d="M0.2 6.4l2.5-1.7 1.6 2.4L8.4 0.2l2.4 1.5-6.600 10z" fill="#fff"/></svg>已支付</span></div></div>
<div class="row even" style="top:826.70px"><span class="chk" style="top:12px"></span><div class="c1" style="left:50px">CC16536558930155</div><div class="c2" style="left:260px"><span class="usr">一念执着</span></div><div class="c3" style="left:470px"><span class="amt"><span style="margin-right:2px">¥</span>3.00 元</span></div><div class="c4" style="left:680px">2022-12-16 09:20:55</div><div class="c5" style="left:890px">微信官方</div><div class="c6" style="left:1100px">暂未记录IP</div><div class="c7" style="left:1310px"><span class="paid"><svg width="11" height="12" viewBox="0 0 11 12" style="margin-right:4px;vertical-align:-1px"><path d="M0.2 6.4l2.5-1.7 1.6 2.4L8.4 0.2l2.4 1.5-6.600 10z" fill="#fff"/></svg>已支付</span></div></div>
<div class="abs" style="left:0;top:868px;width:1530px;height:1px;background:#c3c4c7"></div>
<div class="hrow" style="top:869px"><span class="chk" style="top:12px"></span><div style="left:50px">订单号</div><div style="left:260px">用户</div><div style="left:470px">充值金额</div><div style="left:680px">订单时间</div><div style="left:890px">支付方式</div><div style="left:1100px">支付IP</div><div style="left:1310px">支付结果</div></div>
</div>
<div class="foot">感谢使用 <a>WordPress</a> 进行创作。</div>
<div class="ver">6.5.3 版本</div>
</body></html>
